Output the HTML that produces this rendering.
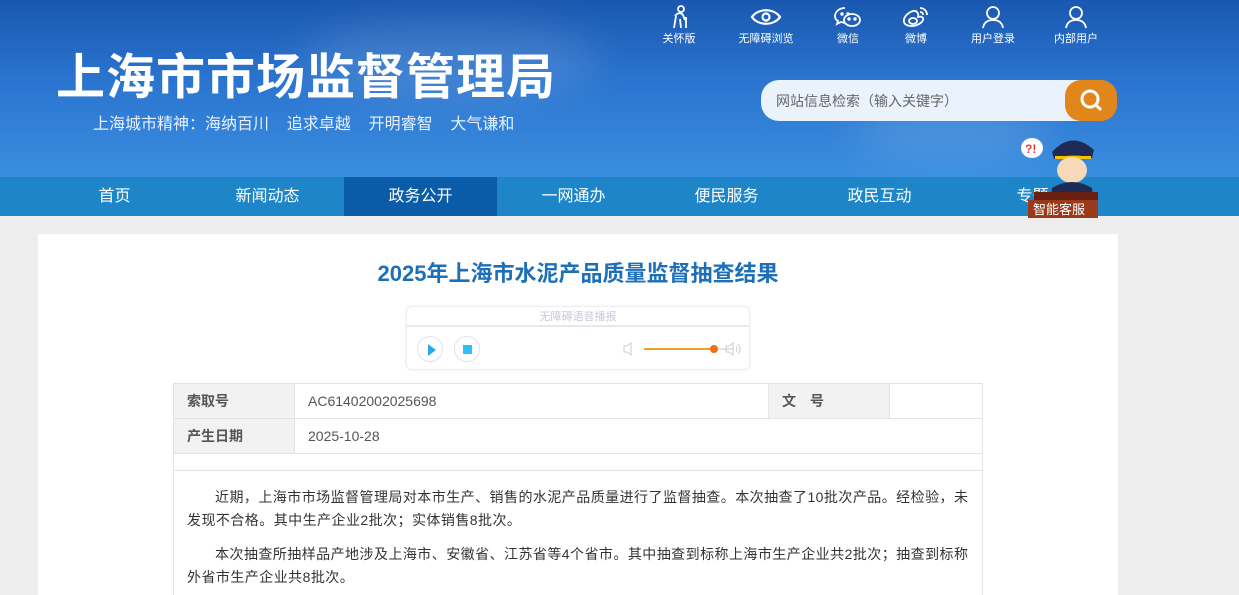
<!DOCTYPE html>
<html><head><meta charset="utf-8"><style>
*{margin:0;padding:0;box-sizing:border-box}
html{width:1239px;height:595px;overflow:hidden}
body{width:1239px;height:595px;overflow:hidden;background:#eeeeee;font-family:"Liberation Sans","Noto Sans CJK SC",sans-serif;position:relative}
.hdr{position:absolute;left:0;top:0;width:1239px;height:177px;background:linear-gradient(180deg,#1a58b0 0%,#2a74cf 45%,#3a8ee0 100%)}
.cloud{position:absolute;border-radius:50%;background:rgba(255,255,255,.12);filter:blur(20px)}
.title{position:absolute;left:56px;top:44px;font-size:49px;font-weight:bold;color:#fff;letter-spacing:1px;font-family:"Noto Sans CJK SC",sans-serif;line-height:60px}
.slogan{position:absolute;left:93px;top:110px;font-size:16px;color:#e8f0ff;white-space:pre}
.top{position:absolute;top:5px;color:#fff;font-size:11px;text-align:center;width:80px}
.top svg{display:block;margin:0 auto 1px}
.search{position:absolute;left:761px;top:80px;width:356px;height:41px;background:#eaf2fb;border-radius:18px}
.search span{position:absolute;left:15px;top:11px;font-size:14px;color:#666}
.sbtn{position:absolute;left:1065px;top:80px;width:52px;height:41px;background:#e0861a;border-radius:16px}
.nav{position:absolute;left:0;top:177px;width:1239px;height:39px;background:#1e86c8}
.nav div{position:absolute;top:0;width:153px;height:39px;line-height:39px;text-align:center;color:#fff;font-size:16px}
.nav .on{background:#0a5ba8}
.main{position:absolute;left:38px;top:234px;width:1080px;height:361px;background:#fff;overflow:hidden}
h1{position:absolute;left:0;width:1080px;top:22px;text-align:center;font-size:22px;color:#1d6fb8;font-weight:bold}
.player{position:absolute;left:368px;top:72px;width:344px;height:64px;border:1px solid #eceef3;border-radius:6px;box-shadow:0 0 3px rgba(0,0,0,.06)}
.player .t{height:20px;border-bottom:2px solid #e6e8ee;text-align:center;font-size:11px;color:#c8c8d8;line-height:20px}
.circ{position:absolute;width:26px;height:26px;border:1px solid #e0e3ec;border-radius:50%}
table{position:absolute;left:135px;top:149px;width:810px;border-collapse:collapse;font-size:14px;color:#555}
td{border:1px solid #e3e3e3;height:35px;padding-left:13px}
td.l{background:#f2f2f2;font-weight:bold;color:#555}
.txt{position:absolute;left:149px;top:252px;width:785px;font-size:14px;color:#333;line-height:23px;letter-spacing:.45px}
.txt p{text-indent:2em;margin-bottom:11px}
</style></head><body>
<div class="hdr">
<div class="cloud" style="left:300px;top:20px;width:300px;height:80px"></div>
<div class="cloud" style="left:850px;top:100px;width:200px;height:60px"></div>
<div class="title">上海市市场监督管理局</div>
<div class="slogan">上海城市精神：海纳百川    追求卓越    开明睿智    大气谦和</div>

<div class="top" style="left:639px"><svg width="22" height="24" viewBox="0 0 22 24" fill="none" stroke="#fff" stroke-width="1.8"><circle cx="13" cy="4" r="3"/><path d="M7 11c2-3 6-4 8-1l2 5M8 11l-2 12M12 14l1 9M18 12v11"/></svg>关怀版</div>
<div class="top" style="left:726px"><svg width="32" height="24" viewBox="0 0 32 24" fill="none" stroke="#fff" stroke-width="2.2"><path d="M2 12C8 3 24 3 30 12C24 21 8 21 2 12Z"/><circle cx="16" cy="12" r="3.5"/></svg>无障碍浏览</div>
<div class="top" style="left:808px"><svg width="30" height="24" viewBox="0 0 30 24" fill="none" stroke="#fff" stroke-width="1.8"><path d="M12 3C6 3 2 7 2 11c0 2 1 4 3 5l-1 3 4-2c1 0 3 1 4 1"/><ellipse cx="19" cy="15" rx="8" ry="6"/><circle cx="9" cy="9" r=".8" fill="#fff"/><circle cx="15" cy="9" r=".8" fill="#fff"/><circle cx="16" cy="14" r=".8" fill="#fff"/><circle cx="22" cy="14" r=".8" fill="#fff"/></svg>微信</div>
<div class="top" style="left:876px"><svg width="30" height="24" viewBox="0 0 30 24" fill="none" stroke="#fff" stroke-width="1.8"><path d="M12 6C6 8 2 13 3 17s8 5 13 3 8-6 5-8c-2-1-3 0-4 0 1-3-1-7-5-6z"/><ellipse cx="12" cy="16" rx="4" ry="3"/><path d="M19 3c4 0 7 3 7 7M19 7c2 0 3 1 3 3"/></svg>微博</div>
<div class="top" style="left:953px"><svg width="24" height="24" viewBox="0 0 24 24" fill="none" stroke="#fff" stroke-width="1.8"><circle cx="12" cy="8" r="6"/><path d="M2 23c1-6 5-8 10-8s9 2 10 8"/></svg>用户登录</div>
<div class="top" style="left:1036px"><svg width="24" height="24" viewBox="0 0 24 24" fill="none" stroke="#fff" stroke-width="1.8"><circle cx="12" cy="8" r="6"/><path d="M2 23c1-6 5-8 10-8s9 2 10 8"/></svg>内部用户</div>

<div class="search"><span>网站信息检索（输入关键字）</span></div>
<div class="sbtn"><svg width="52" height="41" viewBox="0 0 52 41" fill="none" stroke="#fff" stroke-width="3"><circle cx="25" cy="19" r="8"/><path d="M31 25l5 5"/></svg></div>
</div>
<div class="nav">
<div style="left:38px">首页</div><div style="left:191px">新闻动态</div><div class="on" style="left:344px">政务公开</div><div style="left:497px">一网通办</div><div style="left:650px">便民服务</div><div style="left:803px">政民互动</div><div style="left:956px">专题</div>
</div>
<svg style="position:absolute;left:1010px;top:128px" width="92" height="95" viewBox="0 0 92 95">
<ellipse cx="22" cy="20" rx="11" ry="10" fill="#fff"/><text x="15" y="25" font-size="12" fill="#e33" font-weight="bold">?!</text>
<path d="M42 24 Q62 2 84 22 L82 30 Q62 24 44 31Z" fill="#1f2a55"/>
<rect x="45" y="28" width="36" height="3" fill="#f2c200"/>
<ellipse cx="62" cy="42" rx="15" ry="13" fill="#f6d9b8"/>
<path d="M42 60 Q62 48 82 60 L84 75 L40 75Z" fill="#1f2a55"/>
<rect x="24" y="64" width="64" height="8" fill="#6a2010"/>
<rect x="18" y="72" width="70" height="18" fill="#9a3a1a"/>
<text x="23" y="86" font-size="13" fill="#fff" font-family="Noto Sans CJK SC">智能客服</text>
</svg>
<div class="main">
<h1>2025年上海市水泥产品质量监督抽查结果</h1>
<div class="player"><div class="t">无障碍语音播报</div>
<div class="circ" style="left:10px;top:29px"><svg width="26" height="26"><path d="M10 7l8 6-8 6z" fill="#2aa8f0"/></svg></div>
<div class="circ" style="left:47px;top:29px"><svg width="26" height="26"><rect x="8" y="8" width="9" height="9" fill="#2cc2f5"/></svg></div>
<svg style="position:absolute;left:215px;top:34px" width="125" height="16"><path d="M2 5h3l4-3v12l-4-3H2z" fill="none" stroke="#ccc"/><line x1="22" y1="8" x2="92" y2="8" stroke="#f0a020" stroke-width="2"/><line x1="92" y1="8" x2="112" y2="8" stroke="#e2e2e2" stroke-width="2"/><circle cx="92" cy="8" r="4" fill="#f07010"/><path d="M104 5h3l4-3v12l-4-3h-3z" fill="none" stroke="#ccc"/><path d="M114 5q2 3 0 6M116 3q4 5 0 10" fill="none" stroke="#ccc"/></svg>
</div>
<table>
<tr><td class="l" style="width:121px">索取号</td><td style="width:474px">AC61402002025698</td><td class="l" style="width:121px">文　号</td><td></td></tr>
<tr><td class="l">产生日期</td><td colspan="3">2025-10-28</td></tr>
<tr><td colspan="4" style="height:17px"></td></tr>
<tr><td colspan="4" style="height:150px"></td></tr>
</table>
<div class="txt">
<p>近期，上海市市场监督管理局对本市生产、销售的水泥产品质量进行了监督抽查。本次抽查了10批次产品。经检验，未发现不合格。其中生产企业2批次；实体销售8批次。</p>
<p>本次抽查所抽样品产地涉及上海市、安徽省、江苏省等4个省市。其中抽查到标称上海市生产企业共2批次；抽查到标称外省市生产企业共8批次。</p>
</div>
</div>
</body></html>
